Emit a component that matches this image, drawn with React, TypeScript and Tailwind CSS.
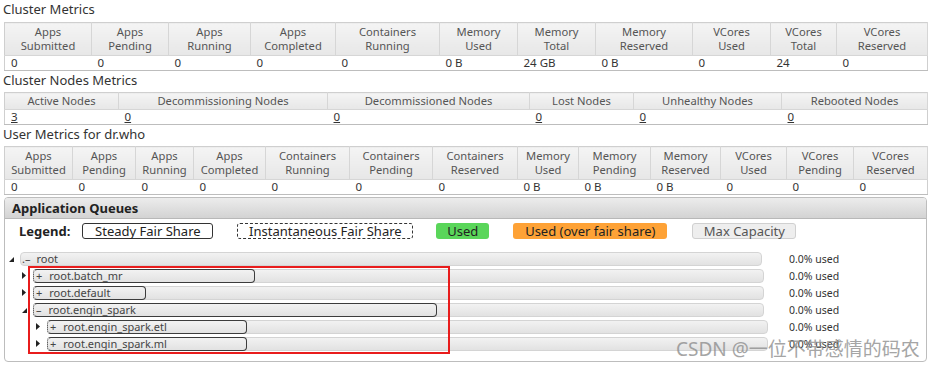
import React from "react";

type Col = { a: string; b?: string; w: string; v: string };

const t1: Col[] = [
  { a: "Apps", b: "Submitted", w: "w-[87px]", v: "0" },
  { a: "Apps", b: "Pending", w: "w-[77px]", v: "0" },
  { a: "Apps", b: "Running", w: "w-[82px]", v: "0" },
  { a: "Apps", b: "Completed", w: "w-[85px]", v: "0" },
  { a: "Containers", b: "Running", w: "w-[104px]", v: "0" },
  { a: "Memory", b: "Used", w: "w-[78px]", v: "0 B" },
  { a: "Memory", b: "Total", w: "w-[78px]", v: "24 GB" },
  { a: "Memory", b: "Reserved", w: "w-[97px]", v: "0 B" },
  { a: "VCores", b: "Used", w: "w-[78px]", v: "0" },
  { a: "VCores", b: "Total", w: "w-[66px]", v: "24" },
  { a: "VCores", b: "Reserved", w: "w-[91px]", v: "0" },
];

const t2: Col[] = [
  { a: "Active Nodes", w: "w-[114px]", v: "3" },
  { a: "Decommissioning Nodes", w: "w-[209px]", v: "0" },
  { a: "Decommissioned Nodes", w: "w-[202px]", v: "0" },
  { a: "Lost Nodes", w: "w-[104px]", v: "0" },
  { a: "Unhealthy Nodes", w: "w-[148px]", v: "0" },
  { a: "Rebooted Nodes", w: "w-[146px]", v: "0" },
];

const t3: Col[] = [
  { a: "Apps", b: "Submitted", w: "w-[68px]", v: "0" },
  { a: "Apps", b: "Pending", w: "w-[63px]", v: "0" },
  { a: "Apps", b: "Running", w: "w-[58px]", v: "0" },
  { a: "Apps", b: "Completed", w: "w-[72px]", v: "0" },
  { a: "Containers", b: "Running", w: "w-[84px]", v: "0" },
  { a: "Containers", b: "Pending", w: "w-[83px]", v: "0" },
  { a: "Containers", b: "Reserved", w: "w-[85px]", v: "0" },
  { a: "Memory", b: "Used", w: "w-[61px]", v: "0 B" },
  { a: "Memory", b: "Pending", w: "w-[72px]", v: "0 B" },
  { a: "Memory", b: "Reserved", w: "w-[70px]", v: "0 B" },
  { a: "VCores", b: "Used", w: "w-[66px]", v: "0" },
  { a: "VCores", b: "Pending", w: "w-[67px]", v: "0" },
  { a: "VCores", b: "Reserved", w: "w-[74px]", v: "0" },
];

function Heading({ children }: { children: React.ReactNode }) {
  return (
    <div className="h-[21px] pl-[3px] text-[13px] leading-[19px] text-[#333]">{children}</div>
  );
}

function MetricsTable({ cols, link }: { cols: Col[]; link?: boolean }) {
  return (
    <table className="ml-[4px] w-[923px] table-fixed border-collapse border border-[#cfcfcf] border-b-[#bdbdbd]">
      <colgroup>
        {cols.map((c, i) => (
          <col key={i} className={c.w} />
        ))}
      </colgroup>
      <thead>
        <tr>
          {cols.map((c, i) => (
            <th
              key={i}
              className={`border-r border-b border-[#d6d6d6] bg-gradient-to-b from-[#f4f4f4] to-[#e7e7e7] text-center text-[11.2px] font-normal leading-[14px] text-[#555] ${
                c.b ? "py-[2px]" : "py-[1px]"
              }`}
            >
              {c.a}
              {c.b && (
                <>
                  <br />
                  {c.b}
                </>
              )}
            </th>
          ))}
        </tr>
      </thead>
      <tbody>
        <tr>
          {cols.map((c, i) => (
            <td key={i} className="h-[14px] bg-white p-0 pl-[6px] text-left text-[11.5px] leading-[14px] text-[#333]">
              {link ? <span className="underline">{c.v}</span> : c.v}
            </td>
          ))}
        </tr>
      </tbody>
    </table>
  );
}

function Tri({ open }: { open: boolean }) {
  return open ? (
    <svg width="5" height="5" viewBox="0 0 5 5">
      <polygon points="5,0 5,5 0,5" fill="#222" />
    </svg>
  ) : (
    <svg width="4" height="7" viewBox="0 0 4 7">
      <polygon points="0,0 4,3.5 0,7" fill="#222" />
    </svg>
  );
}

type Q = {
  level: 0 | 1 | 2;
  open: boolean;
  label: string;
  sign: string;
  box?: string;
};

const queues: Q[] = [
  { level: 0, open: true, label: "root", sign: "–" },
  { level: 1, open: false, label: "root.batch_mr", sign: "+", box: "w-[222px]" },
  { level: 1, open: false, label: "root.default", sign: "+", box: "w-[113px]" },
  { level: 1, open: true, label: "root.engin_spark", sign: "–", box: "w-[404px]" },
  { level: 2, open: false, label: "root.engin_spark.etl", sign: "+", box: "w-[200px]" },
  { level: 2, open: false, label: "root.engin_spark.ml", sign: "+", box: "w-[200px]" },
];

const indent = ["ml-[4px] w-[11px]", "ml-[17px] w-[11px]", "ml-[31px] w-[11px]"];
const barW = ["w-[742px]", "w-[731px]", "w-[721px]"];

function QueueRow({ q }: { q: Q }) {
  return (
    <div className="flex h-[17px] items-center">
      <div className="flex w-[784px] items-center">
        <div className={`flex items-center ${indent[q.level]} ${q.open ? "pt-[1px]" : ""}`}>
          <Tri open={q.open} />
        </div>
        <div
          className={`relative h-[14px] rounded-[4px] border border-[#d4d4d4] bg-gradient-to-b from-[#f2f2f2] to-[#e2e2e2] ${barW[q.level]}`}
        >
          {q.box ? (
            <div
              className={`absolute -left-px -top-px -bottom-px flex items-center rounded-[4px] border border-[#3c3c3c] [border-left-style:dotted] pl-[2px] text-[11px] leading-[12px] text-[#444] ${q.box}`}
            >
              <span>{q.sign}</span>
              <span className="ml-[7px]">{q.label}</span>
            </div>
          ) : (
            <div className="flex h-full items-center pl-[1px] text-[11px] leading-[12px] text-[#444]">
              <span>.{q.sign}</span>
              <span className="ml-[6px]">{q.label}</span>
            </div>
          )}
        </div>
      </div>
      <div className="text-[10.5px] leading-[12px] text-[#333]">0.0% used</div>
    </div>
  );
}

export default function App() {
  return (
    <div className="relative h-[367px] w-[933px] overflow-hidden bg-white font-['Noto_Sans',sans-serif] text-[#333]">
      <Heading>Cluster Metrics</Heading>
      <div className="h-[1px]" />
      <MetricsTable cols={t1} />
      <Heading>Cluster Nodes Metrics</Heading>
      <MetricsTable cols={t2} link />
      <Heading>User Metrics for dr.who</Heading>
      <MetricsTable cols={t3} />

      <div className="ml-[4px] mt-[2px] w-[923px] overflow-hidden rounded-[4px] border border-[#bdbdbd] bg-white">
        <div className="h-[21px] border-b border-[#b8b8b8] bg-gradient-to-b from-[#ececec] to-[#d3d3d3] pl-[7px] text-[13px] font-bold leading-[21px] text-[#222]">
          Application Queues
        </div>
        <div className="pt-[4px] pb-[9px]">
          <div className="flex h-[16px] items-center text-[13px] text-[#222]">
            <span className="ml-[14px] font-bold leading-[16px]">Legend:</span>
            <span className="ml-[12px] flex h-[16px] w-[131px] items-center justify-center rounded-[3px] border border-[#333] leading-[14px]">
              Steady Fair Share
            </span>
            <span className="ml-[24px] flex h-[16px] w-[176px] items-center justify-center rounded-[3px] border border-dashed border-[#333] leading-[14px]">
              Instantaneous Fair Share
            </span>
            <span className="ml-[23px] flex h-[16px] w-[53px] items-center justify-center rounded-[3px] bg-[#5ad65a] leading-[14px]">
              Used
            </span>
            <span className="ml-[24px] flex h-[16px] w-[154px] items-center justify-center rounded-[3px] bg-[#fea236] leading-[14px]">
              Used (over fair share)
            </span>
            <span className="ml-[25px] flex h-[16px] w-[104px] items-center justify-center rounded-[3px] border border-[#d0d0d0] bg-[#eeeeee] leading-[14px] text-[#555]">
              Max Capacity
            </span>
          </div>
          <div className="mt-[11px]">
            {queues.map((q, i) => (
              <QueueRow key={i} q={q} />
            ))}
          </div>
        </div>
      </div>

      <div className="pointer-events-none absolute left-[28px] top-[266px] h-[88px] w-[422px] border-2 border-[#e81c1c]" />

      <div className="pointer-events-none absolute left-[676px] top-[337px] whitespace-nowrap font-['Noto_Sans','Noto_Sans_CJK_SC',sans-serif] text-[19px] leading-[24px] text-[#8f8f8f] opacity-80">
        CSDN @一位不带感情的码农
      </div>
    </div>
  );
}
